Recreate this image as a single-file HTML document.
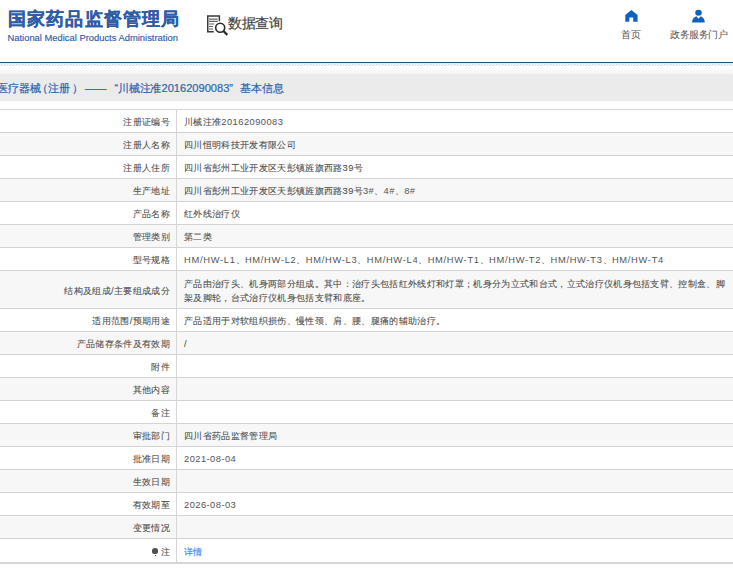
<!DOCTYPE html>
<html><head><meta charset="utf-8">
<style>
*{margin:0;padding:0;box-sizing:border-box}
html,body{width:733px;height:568px;overflow:hidden;background:#fff}
body{position:relative;font-family:"Liberation Sans",sans-serif;color:#444}
.abs{position:absolute;white-space:nowrap}
#logo{left:7.8px;top:7px;font-size:18px;letter-spacing:1.2px;font-weight:bold;color:#2f5ca6;line-height:24px;-webkit-text-stroke:0.2px #2f5ca6}
#en{left:7.5px;top:31.5px;font-size:9.4px;color:#2f5ca6;line-height:12px;-webkit-text-stroke:0.15px #2f5ca6}
#sq{left:228px;top:13px;font-size:14px;letter-spacing:-0.4px;color:#444;line-height:20px;-webkit-text-stroke:0.2px #444}
#home-t{left:620.5px;top:28.5px;font-size:9.9px;color:#555;line-height:12px}
#gov-t{left:670px;top:28.5px;font-size:9.6px;letter-spacing:-0.5px;color:#555;line-height:12px}
#bl{left:0;top:62px;width:733px;height:1px;background:#234f7f}
#bl2{left:0;top:63px;width:733px;height:1px;background:#d6f1fa}
#pat{left:0;top:64px;width:733px;height:1px;background:repeating-linear-gradient(90deg,#fff 0 1px,#cfe6f2 1px 3px)}
#pat2{left:0;top:65px;width:733px;height:1px;background:repeating-linear-gradient(90deg,#e3e3e3 0 2px,#fff 2px 3px)}
#grad{left:0;top:66px;width:733px;height:8px;background:linear-gradient(#fff,#f4f4f4)}
#band{left:0;top:74px;width:733px;height:27px;background:#ebebeb}
.tt{top:80px;font-size:10.7px;color:#2d64ad;line-height:16px;-webkit-text-stroke:0.2px #2d64ad}
#tbl{left:0;top:109px;width:733px;border-top:1px solid #d3d3d3}
.r{position:relative;height:23px;border-bottom:1px solid #d3d3d3;background:#fff}
.r:nth-child(even){background:#f7f7f7}
.r.d{height:38px}
.l{position:absolute;left:0;top:0;bottom:0;width:177px;border-right:1px solid #d6d6d6;text-align:right;padding-right:6px;padding-top:1px;font-size:9.33px;line-height:22px;color:#4d4d4d;white-space:nowrap;-webkit-text-stroke:0.08px #4d4d4d;letter-spacing:0.33px}
.v{position:absolute;left:177px;top:0;right:0;padding-left:7px;padding-top:1px;font-size:9.33px;line-height:22px;color:#4d4d4d;white-space:nowrap;-webkit-text-stroke:0.08px #4d4d4d;letter-spacing:0.33px}
.e{letter-spacing:0.45px;-webkit-text-stroke:0;color:#555}
.m{letter-spacing:0.7px;-webkit-text-stroke:0;color:#555}
.r.d .l{line-height:37px;padding-top:2px}
.r.d .v{line-height:14.3px;padding-top:6.2px}
#bot{left:0;top:562px;width:733px;height:2px;background:#d5d5d5}
a{color:#3d8ff0;text-decoration:none;-webkit-text-stroke:0.2px #3d8ff0}
.r:last-child{border-bottom:none}
.r:last-child .l,.r:last-child .v{padding-top:2px}
.pin{display:inline-block;position:relative;width:6.2px;height:5.4px;border-radius:50%;background:#505050;margin-right:2.4px;top:-1.5px}
.pin:after{content:"";position:absolute;left:2.5px;top:6.4px;width:1.2px;height:1px;background:#505050}
</style></head><body>
<div class="abs" id="logo">国家药品监督管理局</div>
<div class="abs" id="en">National Medical Products Administration</div>
<svg class="abs" style="left:206px;top:14px" width="24" height="22" viewBox="0 0 24 22">
<path d="M13.4 7.2V1.9H1.75V17.8H7.8" fill="none" stroke="#3a3a3a" stroke-width="1.5"/>
<path d="M3 5.1H11.7M3 7.4H11.7M3 10H8.3M3 12.5H7M3 15H7" stroke="#666" stroke-width="1.1"/>
<circle cx="14.2" cy="13.8" r="4.5" fill="none" stroke="#2a2a2a" stroke-width="1.6"/>
<path d="M17.4 17L21.3 20.9" stroke="#2a2a2a" stroke-width="2.2"/>
</svg>
<div class="abs" id="sq">数据查询</div>
<svg class="abs" style="left:624px;top:9px" width="15" height="14" viewBox="0 0 15 14">
<path d="M7.4 0.9L13.6 6V12.7H9.2V8.5H5.3V12.7H1.3V6Z" fill="#1060c0"/>
</svg>
<div class="abs" id="home-t">首页</div>
<svg class="abs" style="left:691px;top:9px" width="15" height="14" viewBox="0 0 15 14">
<ellipse cx="7.5" cy="3.7" rx="3.3" ry="3" fill="#1060c0"/>
<path d="M1 13.6C1 10.5 2.8 8 5.3 7.2L7.5 9.7L9.7 7.2C12.2 8 13.8 10.5 13.8 13.6Z" fill="#1060c0"/>
</svg>
<div class="abs" id="gov-t">政务服务门户</div>
<div class="abs" id="bl"></div>
<div class="abs" id="bl2"></div>
<div class="abs" id="pat"></div>
<div class="abs" id="pat2"></div>
<div class="abs" id="grad"></div>
<div class="abs" id="band"></div>
<div class="abs tt" style="left:-2.6px;letter-spacing:-0.3px">医疗器械</div>
<div class="abs tt" style="left:36.7px">（</div>
<div class="abs tt" style="left:48.3px;letter-spacing:-0.3px">注册</div>
<div class="abs tt" style="left:72px">）</div>
<div class="abs tt" style="left:85px">——</div>
<div class="abs tt" style="left:114.5px">“</div>
<div class="abs tt" style="left:118.3px;letter-spacing:-0.3px">川械注准</div>
<div class="abs tt" style="left:161.5px;font-size:11.1px">20162090083”</div>
<div class="abs tt" style="left:239.9px">基本信息</div>
<div class="abs" id="tbl">
<div class="r"><div class="l">注册证编号</div><div class="v">川械注准<span class="e">20162090083</span></div></div>
<div class="r"><div class="l">注册人名称</div><div class="v">四川恒明科技开发有限公司</div></div>
<div class="r"><div class="l">注册人住所</div><div class="v">四川省彭州工业开发区天彭镇旌旗西路39号</div></div>
<div class="r"><div class="l">生产地址</div><div class="v">四川省彭州工业开发区天彭镇旌旗西路39号<span class="e">3#</span>、<span class="e">4#</span>、<span class="e">8#</span></div></div>
<div class="r"><div class="l">产品名称</div><div class="v">红外线治疗仪</div></div>
<div class="r"><div class="l">管理类别</div><div class="v">第二类</div></div>
<div class="r"><div class="l">型号规格</div><div class="v"><span class="m">HM/HW-L1</span>、<span class="m">HM/HW-L2</span>、<span class="m">HM/HW-L3</span>、<span class="m">HM/HW-L4</span>、<span class="m">HM/HW-T1</span>、<span class="m">HM/HW-T2</span>、<span class="m">HM/HW-T3</span>、<span class="m">HM/HW-T4</span></div></div>
<div class="r d"><div class="l">结构及组成/主要组成成分</div><div class="v">产品由治疗头、机身两部分组成。其中：治疗头包括红外线灯和灯罩；机身分为立式和台式，立式治疗仪机身包括支臂、控制盒、脚<br>架及脚轮，台式治疗仪机身包括支臂和底座。</div></div>
<div class="r"><div class="l">适用范围/预期用途</div><div class="v">产品适用于对软组织损伤、慢性颈、肩、腰、腿痛的辅助治疗。</div></div>
<div class="r"><div class="l">产品储存条件及有效期</div><div class="v">/</div></div>
<div class="r"><div class="l">附件</div><div class="v"></div></div>
<div class="r"><div class="l">其他内容</div><div class="v"></div></div>
<div class="r"><div class="l">备注</div><div class="v"></div></div>
<div class="r"><div class="l">审批部门</div><div class="v">四川省药品监督管理局</div></div>
<div class="r"><div class="l">批准日期</div><div class="v"><span class="e">2021-08-04</span></div></div>
<div class="r"><div class="l">生效日期</div><div class="v"></div></div>
<div class="r"><div class="l">有效期至</div><div class="v"><span class="e">2026-08-03</span></div></div>
<div class="r"><div class="l">变更情况</div><div class="v"></div></div>
<div class="r"><div class="l"><span class="pin"></span>注</div><div class="v"><a>详情</a></div></div>
</div>
<div class="abs" id="bot"></div>
</body></html>
